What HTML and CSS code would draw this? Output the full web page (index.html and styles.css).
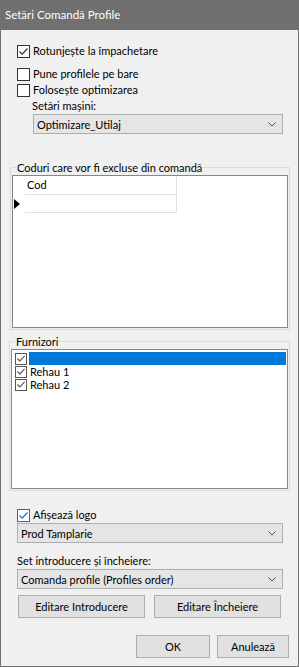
FILE: index.html
```html
<!DOCTYPE html>
<html lang="ro">
<head>
    <meta charset="UTF-8">
    <title>Setări Comandă Profile</title>
    <link rel="stylesheet" href="styles.css">
</head>
<body>
    <div class="window">
        <div class="titlebar">Setări Comandă Profile</div>

        <div class="content">
            <label class="check first">
                <span class="box"><svg viewBox="0 0 11 11"><path d="M1.5 5.5 L4.2 8.2 L9.5 2.5" /></svg></span>
                Rotunjește la împachetare
            </label>
            <label class="check gap">
                <span class="box"></span>
                Pune profilele pe bare
            </label>
            <label class="check">
                <span class="box"></span>
                Folosește optimizarea
            </label>
            <div class="label indent">Setări mașini:</div>
            <div class="combo narrow">
                <span>Optimizare_Utilaj</span>
                <svg viewBox="0 0 8 5"><path d="M0.5 0.5 L4 4 L7.5 0.5" /></svg>
            </div>

            <fieldset class="group codes">
                <legend>Coduri care vor fi excluse din comandă</legend>
                <div class="grid">
                    <div class="grid-row">
                        <div class="rowhead"></div>
                        <div class="cell">Cod</div>
                    </div>
                    <div class="grid-row">
                        <div class="rowhead"><span class="arrow"></span></div>
                        <div class="cell"></div>
                    </div>
                </div>
            </fieldset>

            <fieldset class="group suppliers">
                <legend>Furnizori</legend>
                <div class="list">
                    <div class="item">
                        <span class="box small"><svg viewBox="0 0 11 11"><path d="M1.5 5.5 L4.2 8.2 L9.5 2.5" /></svg></span>
                        <span class="item-text selected"></span>
                    </div>
                    <div class="item">
                        <span class="box small"><svg viewBox="0 0 11 11"><path d="M1.5 5.5 L4.2 8.2 L9.5 2.5" /></svg></span>
                        <span class="item-text">Rehau 1</span>
                    </div>
                    <div class="item">
                        <span class="box small"><svg viewBox="0 0 11 11"><path d="M1.5 5.5 L4.2 8.2 L9.5 2.5" /></svg></span>
                        <span class="item-text">Rehau 2</span>
                    </div>
                </div>
            </fieldset>

            <label class="check logo">
                <span class="box active"><svg viewBox="0 0 11 11"><path d="M1.5 5.5 L4.2 8.2 L9.5 2.5" /></svg></span>
                Afișează logo
            </label>
            <div class="combo wide">
                <span>Prod Tamplarie</span>
                <svg viewBox="0 0 8 5"><path d="M0.5 0.5 L4 4 L7.5 0.5" /></svg>
            </div>

            <div class="label set-label">Set introducere și încheiere:</div>
            <div class="combo wide">
                <span>Comanda profile (Profiles order)</span>
                <svg viewBox="0 0 8 5"><path d="M0.5 0.5 L4 4 L7.5 0.5" /></svg>
            </div>

            <div class="button-row">
                <button class="btn edit">Editare Introducere</button>
                <button class="btn edit">Editare Încheiere</button>
            </div>

            <div class="dialog-buttons">
                <button class="btn ok">OK</button>
                <button class="btn cancel">Anulează</button>
            </div>
        </div>
    </div>
</body>
</html>
```

FILE: styles.css
```css
* {
    box-sizing: border-box;
}

body {
    margin: 0;
    padding: 0;
    background-color: #ffffff;
    font-family: Lato, "Noto Sans", sans-serif;
    font-size: 11px;
    color: #000000;
}

.window {
    width: 299px;
    height: 667px;
    background-color: #f0f0f0;
    border: 1px solid #707070;
    border-top: none;
    display: flex;
    flex-direction: column;
}

.titlebar {
    height: 30px;
    margin: 0 -1px;
    background-color: #707070;
    color: #ffffff;
    font-size: 11.5px;
    line-height: 30px;
    padding-left: 5px;
}

.content {
    display: flex;
    flex-direction: column;
    align-items: flex-start;
}

/* checkboxes */
.check {
    display: flex;
    align-items: center;
    gap: 3px;
    height: 16px;
    margin-left: 16px;
    line-height: 16px;
    white-space: nowrap;
}

.check.first {
    margin-top: 13px;
}

.check.gap {
    margin-top: 7px;
}

.check.logo {
    margin-top: 16px;
}

.box {
    width: 13px;
    height: 13px;
    border: 1px solid #333333;
    background-color: #ffffff;
    display: flex;
    align-items: center;
    justify-content: center;
    flex-shrink: 0;
}

.box svg {
    width: 11px;
    height: 11px;
    fill: none;
    stroke: #333333;
    stroke-width: 1.2;
}

.box.active {
    border-color: #0078d7;
}

.box.active svg {
    stroke: #0078d7;
}

.box.small {
    width: 12px;
    height: 12px;
    border-color: #555555;
}

.box.small svg {
    stroke: #555555;
}

.label {
    height: 16px;
    line-height: 16px;
    white-space: nowrap;
}

.label.indent {
    margin-left: 31px;
}

.label.set-label {
    margin-top: 10px;
    margin-left: 16px;
}

/* combo boxes */
.combo {
    height: 20px;
    background-color: #e5e5e5;
    border: 1px solid #adadad;
    display: flex;
    align-items: center;
    justify-content: space-between;
    padding: 0 6px 0 3px;
    white-space: nowrap;
}

.combo svg {
    width: 8px;
    height: 5px;
    fill: none;
    stroke: #505050;
    stroke-width: 1;
}

.combo.narrow {
    width: 250px;
    margin-left: 32px;
}

.combo.wide {
    width: 266px;
    margin-left: 16px;
}

/* group boxes */
.group {
    margin: 0;
    padding: 0 1px 1px 1px;
    border: 1px solid #dcdcdc;
    min-width: 0;
}

.group legend {
    padding: 0 1px;
    margin-left: 4px;
    line-height: 15px;
    white-space: nowrap;
}

.group.codes {
    margin-top: 26px;
    margin-left: 9px;
    width: 280px;
}

.group.suppliers {
    margin-top: 4px;
    margin-left: 8px;
    width: 281px;
}

.grid {
    height: 153px;
    background-color: #ffffff;
    border: 1px solid #828790;
}

.grid-row {
    display: flex;
    height: 18px;
}

.grid-row:first-child {
    height: 19px;
}

.rowhead {
    width: 12px;
    display: flex;
    align-items: center;
    justify-content: flex-start;
    padding-left: 1px;
}

.arrow {
    width: 0;
    height: 0;
    border-top: 5px solid transparent;
    border-bottom: 5px solid transparent;
    border-left: 6px solid #000000;
}

.cell {
    width: 152px;
    border-right: 1px solid #e0e0e0;
    border-bottom: 1px solid #e0e0e0;
    padding-left: 2px;
    line-height: 18px;
}

.list {
    height: 140px;
    background-color: #ffffff;
    border: 1px solid #828790;
    padding: 2px 1px 0 3px;
}

.item {
    display: flex;
    align-items: center;
    height: 13px;
    gap: 2px;
}

.item-text {
    flex: 1;
    height: 13px;
    line-height: 13px;
    padding-left: 1px;
    overflow: hidden;
}

.item-text.selected {
    background-color: #0078d7;
}

/* buttons */
.btn {
    height: 23px;
    background-color: #e1e1e1;
    border: 1px solid #adadad;
    font-family: inherit;
    font-size: 11px;
    color: #000000;
    padding: 0;
    margin: 0;
}

.button-row {
    display: flex;
    gap: 9px;
    margin-top: 6px;
    margin-left: 17px;
}

.btn.edit {
    width: 127px;
}

.dialog-buttons {
    display: flex;
    gap: 7px;
    margin-top: 17px;
    margin-left: 135px;
}

.btn.ok {
    width: 74px;
}

.btn.cancel {
    width: 72px;
}
```
